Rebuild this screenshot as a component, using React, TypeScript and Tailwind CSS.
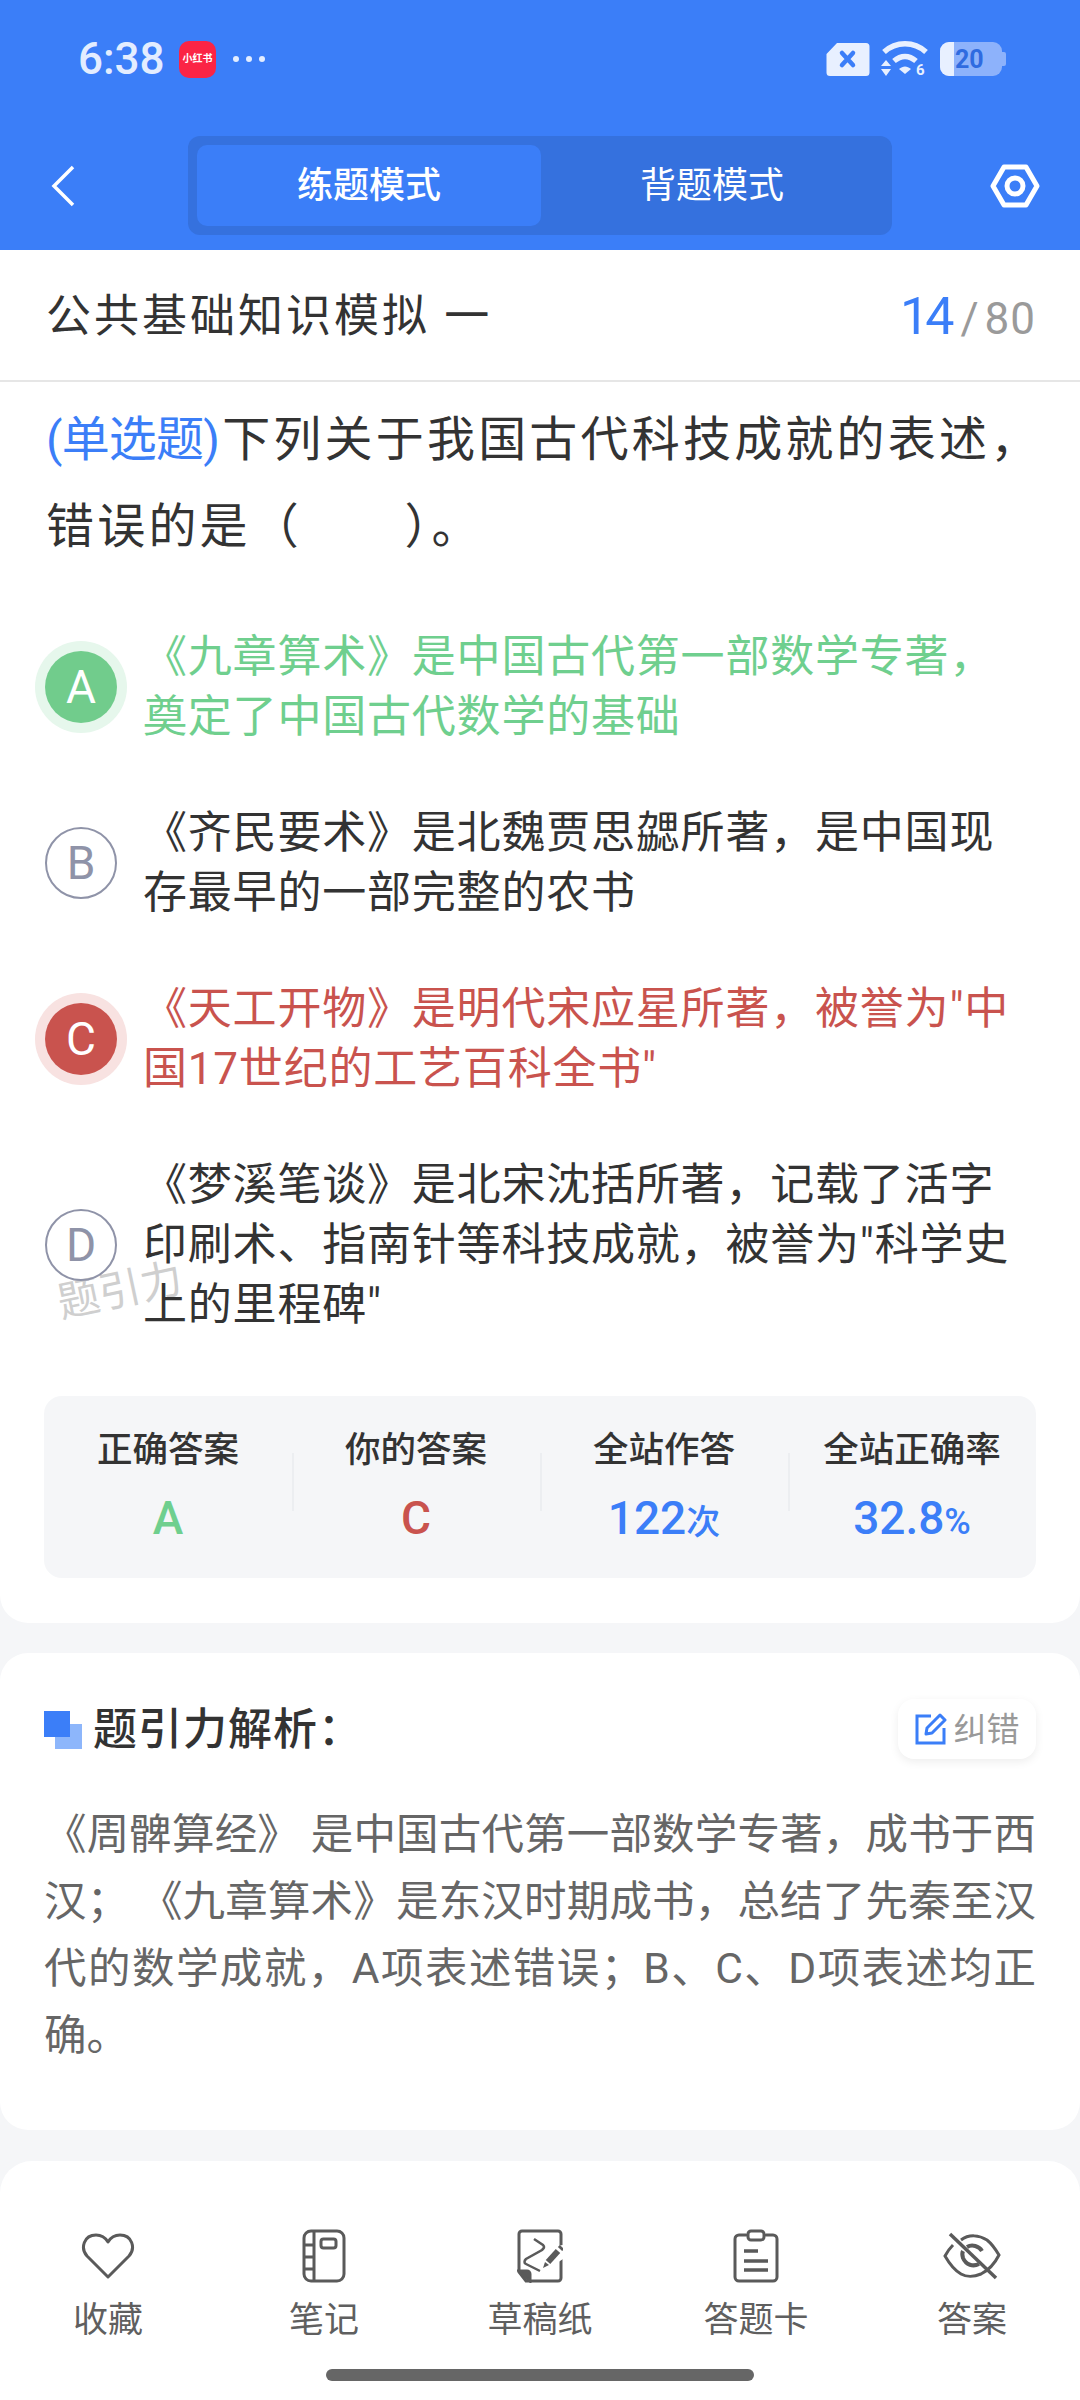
import type { ReactNode } from 'react';

const FONT = "font-['Roboto','Noto_Sans_CJK_SC',sans-serif]";

interface OptionRow {
  letter: string;
  text: string;
  state: 'correct' | 'wrong' | 'idle';
}

const OPTIONS: OptionRow[] = [
  { letter: 'A', text: '《九章算术》是中国古代第一部数学专著，奠定了中国古代数学的基础', state: 'correct' },
  { letter: 'B', text: '《齐民要术》是北魏贾思勰所著，是中国现存最早的一部完整的农书', state: 'idle' },
  { letter: 'C', text: '《天工开物》是明代宋应星所著，被誉为"中国17世纪的工艺百科全书"', state: 'wrong' },
  { letter: 'D', text: '《梦溪笔谈》是北宋沈括所著，记载了活字印刷术、指南针等科技成就，被誉为"科学史上的里程碑"', state: 'idle' },
];

function StatusIcons() {
  return (
    <div className="flex items-center gap-[11px]">
      <svg width="44" height="35" viewBox="0 0 44 35">
        <path d="M11 1h29a3.5 3.5 0 0 1 3.500 3.500v26a3.500 3.500 0 0 1-3.500 3.500H4a3.500 3.500 0 0 1-3.500-3.500V12z" fill="#e8f0ff" />
        <path d="M16 11l11 12M27 11L16 23" stroke="#3b7ef8" strokeWidth="4.500" strokeLinecap="round" />
      </svg>
      <svg width="48" height="36" viewBox="0 0 48 36">
        <path d="M3 11C15 0 33 0 45 11" stroke="#e8f0ff" strokeWidth="5.500" fill="none" />
        <path d="M13 20c7-6 15-6 22 0" stroke="#e8f0ff" strokeWidth="5.500" fill="none" />
        <path d="M18 28c4-3.500 8-3.500 12 0l-6 5z" fill="#e8f0ff" />
        <path d="M5 19l5 6H0zM5 35l5-7H0z" fill="#e8f0ff" />
        <text x="35" y="34" fontSize="15" fontWeight="700" fill="#e8f0ff">6</text>
      </svg>
      <div className="relative flex h-[34px] w-[62px] items-center overflow-hidden rounded-[9px] bg-[#8db2fb]">
        <div className="h-full w-[14px] bg-[#e8f0ff]" />
        <span className="ml-[1px] text-[25px] leading-none font-bold text-[#2f6be0]">20</span>
      </div>
      <div className="-ml-[11px] h-[14px] w-[4px] rounded-r-[2px] bg-[#8db2fb]" />
    </div>
  );
}

function TopBar() {
  return (
    <header className="h-[250px] bg-[#3b7ef8]">
      <div className="flex h-[118px] items-center justify-between pr-[74px] pl-[78px]">
        <div className="flex items-center">
          <span className="w-[101px] text-[44px] leading-none font-medium text-[#e3edff]">6:38</span>
          <div className="flex h-[37px] w-[37px] items-center justify-center rounded-[10px] bg-[#fb2445]">
            <span className="text-[10px] leading-none font-bold whitespace-nowrap text-white">小红书</span>
          </div>
          <div className="ml-[17px] flex gap-[7px]">
            <span className="h-[6px] w-[6px] rounded-full bg-[#e3edff]" />
            <span className="h-[6px] w-[6px] rounded-full bg-[#e3edff]" />
            <span className="h-[6px] w-[6px] rounded-full bg-[#e3edff]" />
          </div>
        </div>
        <StatusIcons />
      </div>
      <div className="mt-[18px] flex h-[99px] items-center pr-[40px] pl-[51px]">
        <svg width="24" height="42" viewBox="0 0 24 42" className="shrink-0">
          <path d="M22 2L3 21l19 19" stroke="#fff" strokeWidth="3.500" fill="none" />
        </svg>
        <div className="ml-[113px] flex h-[99px] w-[704px] items-center rounded-[12px] bg-[#3571de] px-[9px]">
          <div className="flex h-[81px] w-[344px] items-center justify-center rounded-[10px] bg-[#3b7ef8] text-[36px] font-medium text-white">练题模式</div>
          <div className="flex h-[81px] flex-1 items-center justify-center text-[36px] text-white">背题模式</div>
        </div>
        <svg width="50" height="44" viewBox="0 0 50 44" className="ml-[98px] shrink-0">
          <path d="M14 3h22l11 19-11 19H14L3 22z" stroke="#fff" strokeWidth="5" fill="none" strokeLinejoin="round" />
          <circle cx="25" cy="22" r="8" stroke="#fff" strokeWidth="5" fill="none" />
        </svg>
      </div>
    </header>
  );
}

function OptionItem({ option }: { option: OptionRow }) {
  const textTone =
    option.state === 'correct' ? 'text-[#6fcf8e]' : option.state === 'wrong' ? 'text-[#c9534e]' : 'text-[#333333]';
  return (
    <div className="flex items-center">
      <div className="relative h-[72px] w-[72px] shrink-0">
        {option.state === 'correct' && <div className="absolute -inset-[10px] rounded-full bg-[#e6f7ec]" />}
        {option.state === 'wrong' && <div className="absolute -inset-[10px] rounded-full bg-[#f8e2e1]" />}
        <div
          className={
            option.state === 'correct'
              ? 'relative flex h-full w-full items-center justify-center rounded-full bg-[#71cc8c] text-[46px] text-white'
              : option.state === 'wrong'
                ? 'relative flex h-full w-full items-center justify-center rounded-full bg-[#c9534e] text-[46px] text-white'
                : 'relative flex h-full w-full items-center justify-center rounded-full border-2 border-[#8f93a8] text-[46px] text-[#8f93a8]'
          }
        >
          {option.letter}
        </div>
      </div>
      <p className={`ml-[26px] flex-1 text-[44px] leading-[60px] tracking-[0.800px] ${textTone}`}>{option.text}</p>
    </div>
  );
}

function Stat({ label, children, divider }: { label: string; children: ReactNode; divider?: boolean }) {
  return (
    <div className="relative flex flex-col items-center">
      {divider && <div className="absolute top-[25px] left-0 h-[58px] w-[2px] bg-[#eceef1]" />}
      <span className="text-[35.500px] leading-[44px] font-medium text-[#333333]">{label}</span>
      <div className="mt-[24px] h-[44px] leading-[44px]">{children}</div>
    </div>
  );
}

function ToolIcon({ name }: { name: string }) {
  const base = { fill: 'none', stroke: '#5a5a5a', strokeWidth: 3 };
  if (name === 'heart') {
    return (
      <svg width="54" height="48" viewBox="0 0 54 48" {...base}>
        <path d="M27 45L6 24C-1 16 3 3 15 3c5 0 9 2 12 7 3-5 7-7 12-7 12 0 16 13 9 21z" strokeLinejoin="round" />
      </svg>
    );
  }
  if (name === 'note') {
    return (
      <svg width="44" height="54" viewBox="0 0 44 54" {...base}>
        <rect x="2" y="2" width="40" height="50" rx="7" />
        <path d="M12 2v50M2 16h10M2 28h10M2 40h10" />
        <rect x="19" y="10" width="15" height="9" rx="2.500" />
      </svg>
    );
  }
  if (name === 'draft') {
    return (
      <svg width="46" height="54" viewBox="0 0 46 54" {...base}>
        <path d="M9 52h32a3 3 0 0 0 3-3V5a3 3 0 0 0-3-3H5a3 3 0 0 0-3 3v38z" />
        <path d="M2 42h8a3 3 0 0 1 3 3v7z" fill="#5a5a5a" />
        <path d="M17 10l9 6c2 2 1 3-1 5L9 30c-2 2-2 4 0 5l14 7" strokeWidth="2.500" />
        <path d="M33 18L46 16V30L34 38z" fill="#fff" stroke="none" />
        <path d="M31 33l10-11" strokeWidth="6" />
        <path d="M43 20l2-2" strokeWidth="6" />
        <path d="M26 39l2-6 4 3z" fill="#5a5a5a" stroke="none" />
      </svg>
    );
  }
  if (name === 'card') {
    return (
      <svg width="46" height="54" viewBox="0 0 46 54" {...base}>
        <path d="M13 6H6a4 4 0 0 0-4 4v38a4 4 0 0 0 4 4h34a4 4 0 0 0 4-4V10a4 4 0 0 0-4-4h-7" strokeLinecap="round" />
        <rect x="15" y="2" width="16" height="9" rx="3" />
        <path d="M11 22h14M11 32h24M11 41h24" strokeWidth="3.500" />
      </svg>
    );
  }
  return (
    <svg width="58" height="48" viewBox="0 0 58 48" {...base}>
      <path d="M18 8C26 2 36 3 44 8c5 4 9 10 12 15-4 8-10 15-18 19-7 3-15 3-20 0C11 38 6 31 2 24c2-4 5-8 8-11" />
      <path d="M24 15c5-3 12-1 15 4M36 32c-6 3-13 1-16-6-1-3-1-5 0-7" strokeWidth="4" />
      <path d="M7 2l46 44" strokeWidth="3.500" />
    </svg>
  );
}

export default function App() {
  return (
    <div className={`relative h-[2400px] w-[1080px] overflow-hidden bg-[#f5f6f8] ${FONT}`}>
      <TopBar />

      <section className="relative rounded-b-[28px] bg-white pb-[45px]">
        <div className="flex h-[132px] items-center justify-between border-b-2 border-[#e6e6e6] pt-[4px] pr-[44px] pl-[46px]">
          <h1 className="text-[45px] font-normal tracking-[3px] text-[#333333]">公共基础知识模拟 一</h1>
          <div className="flex items-baseline">
            <span className="text-[52px] tracking-[-4px] text-[#3b7ef8]">14</span>
            <span className="ml-[10px] text-[44px] text-[#9a9a9a]">/</span>
            <span className="ml-[6px] text-[44px] tracking-[1px] text-[#9a9a9a]">80</span>
          </div>
        </div>

        <p className="mt-[14px] pr-[24px] pl-[46px] text-[48px] leading-[87px] tracking-[3.200px] text-[#333333]">
          <span className="mr-[3px] tracking-[-0.800px] text-[#3b7ef8]">(单选题)</span>下列关于我国古代科技成就的表述，错误的是（　　）。
        </p>

        <div className="absolute top-[1020px] left-[57px] -rotate-12 text-[42px] leading-none text-[#cfcfcf]">题引力</div>

        <div className="relative mt-[57px] flex flex-col gap-[56px] pr-[58px] pl-[45px]">
          {OPTIONS.map((option) => (
            <OptionItem key={option.letter} option={option} />
          ))}
        </div>

        <div className="mx-[44px] mt-[61px] grid h-[182px] grid-cols-4 rounded-[18px] bg-[#f5f6f8] pt-[32px]">
          <Stat label="正确答案">
            <span className="text-[46px] font-medium text-[#6fcf8e]">A</span>
          </Stat>
          <Stat label="你的答案" divider>
            <span className="text-[46px] font-medium text-[#c9534e]">C</span>
          </Stat>
          <Stat label="全站作答" divider>
            <span className="text-[46px] font-medium text-[#3b7ef8]">122</span>
            <span className="text-[34px] font-medium text-[#3b7ef8]">次</span>
          </Stat>
          <Stat label="全站正确率" divider>
            <span className="text-[46px] font-medium text-[#3b7ef8]">32.8</span>
            <span className="text-[36px] font-medium text-[#3b7ef8]">%</span>
          </Stat>
        </div>
      </section>

      <section className="mt-[30px] h-[477px] rounded-[28px] bg-white px-[44px]">
        <div className="flex h-[150px] items-start justify-between pt-[46px]">
          <div className="mt-[9px] flex items-center">
            <div className="relative h-[38px] w-[38px]">
              <div className="absolute top-[13px] left-[11px] h-[25px] w-[27px] bg-[#8db6fb]" />
              <div className="absolute top-0 left-0 h-[26px] w-[26px] bg-[#3b7ef8]" />
            </div>
            <h2 className="ml-[11px] text-[44px] leading-[44px] font-medium tracking-[1px] text-[#333333]">题引力解析：</h2>
          </div>
          <div className="flex h-[60px] w-[138px] items-center justify-center rounded-[16px] bg-white shadow-[0_3px_10px_rgba(0,0,0,0.07)]">
            <svg width="32" height="32" viewBox="0 0 32 32" fill="none" stroke="#3b7ef8">
              <path d="M16 3H2v27h27V15" strokeWidth="3" />
              <path d="M11 21l1-6L25 2l5 5-13 13z" strokeWidth="3" strokeLinejoin="round" />
            </svg>
            <span className="ml-[7px] text-[33px] leading-none text-[#999999]">纠错</span>
          </div>
        </div>
        <p className="-mt-[2px] text-justify text-[42.500px] leading-[67px] text-[#666666]">
          《周髀算经》 是中国古代第一部数学专著，成书于西汉； 《九章算术》是东汉时期成书，总结了先秦至汉代的数学成就，A项表述错误；B、C、D项表述均正确。
        </p>
      </section>

      <nav className="relative mt-[31px] h-[240px] rounded-t-[32px] bg-white pt-[68px]">
        <div className="grid grid-cols-5">
          {[
            { icon: 'heart', label: '收藏' },
            { icon: 'note', label: '笔记' },
            { icon: 'draft', label: '草稿纸' },
            { icon: 'card', label: '答题卡' },
            { icon: 'eye', label: '答案' },
          ].map((tool) => (
            <div key={tool.icon} className="flex flex-col items-center">
              <div className="flex h-[54px] items-center justify-center">
                <ToolIcon name={tool.icon} />
              </div>
              <span className="mt-[18px] text-[35px] leading-[40px] text-[#5f5f5f]">{tool.label}</span>
            </div>
          ))}
        </div>
        <div className="absolute bottom-[20px] left-[326px] h-[12px] w-[428px] rounded-full bg-[#666666]" />
      </nav>
    </div>
  );
}
